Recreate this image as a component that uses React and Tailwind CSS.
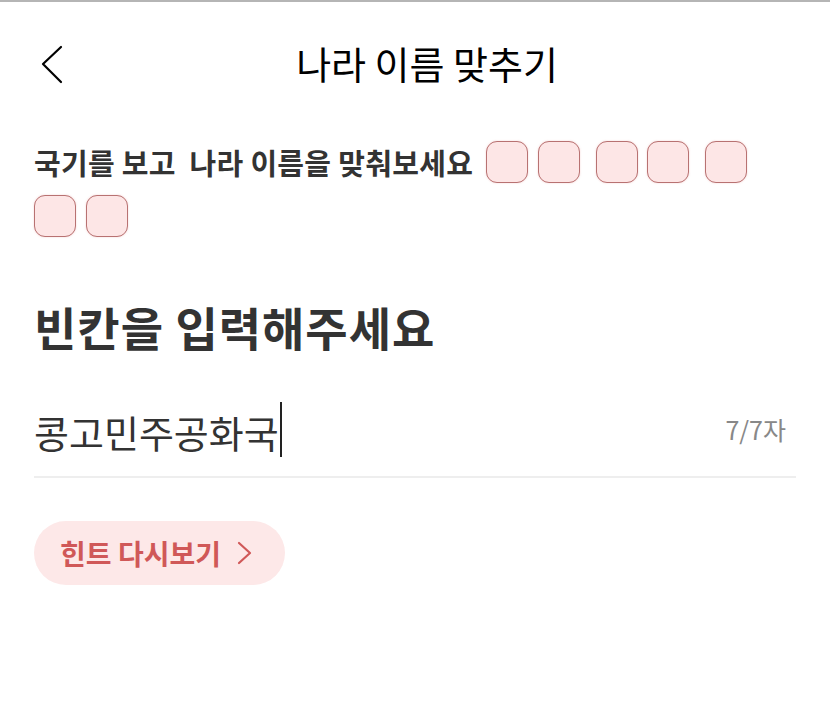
import { useState } from 'react'

const font = { fontFamily: '"Noto Sans CJK KR", "Noto Sans", sans-serif' }

// answer: 콩고 민주 공화국 -> one blank per letter, grouped by word
const groups = [2, 2, 3]

const Blank = ({ last }) => (
  <span
    className={`block w-[42px] h-[42px] rounded-[11px] bg-[#fde6e6] border-[1.5px] border-[#b87272] shadow-[0_0_2px_rgba(220,120,120,0.35)] ${last ? 'mr-[16px]' : 'mr-[9.5px]'}`}
  />
)

export default function App() {
  const [value] = useState('콩고민주공화국')

  return (
    <div className="w-[830px] h-[709px] bg-white border-t-2 border-[#b5b5b5]" style={font}>
      {/* header */}
      <div className="relative h-[122px] flex items-center justify-center pl-[24px]">
        <button className="absolute left-[41px] top-[43px] text-black">
          <svg width="24" height="40" viewBox="0 0 24 40" fill="none" stroke="currentColor" strokeWidth="2.2" strokeLinecap="round" strokeLinejoin="round">
            <path d="M20 2 L2 19 L20 37" />
          </svg>
        </button>
        <h1 className="text-[38px] text-black font-normal leading-none">나라 이름 맞추기</h1>
      </div>

      <div className="px-[34px]">
        {/* question with blanks */}
        <div className="mt-[17px] flex flex-wrap items-center gap-y-[12px]">
          <span className="text-[29px] tracking-[0.3px] leading-[42px] font-bold text-[#333] mr-[13px] whitespace-pre">국기를 보고  나라 이름을 맞춰보세요</span>
          {groups.map((n, g) =>
            Array.from({ length: n }).map((_, i) => (
              <Blank key={`${g}-${i}`} last={i === n - 1} />
            ))
          )}
        </div>

        <h2 className="mt-[66px] text-[46px] tracking-[1px] font-bold text-[#333] leading-none">빈칸을 입력해주세요</h2>

        {/* input */}
        <div className="mt-[53px] flex items-center justify-between border-b-2 border-[#eeeeee] pb-[19px]">
          <div className="flex items-center text-[38px] text-[#333] leading-none">
            <span className="mt-[4px]">{value}</span>
            <span className="w-[2px] h-[55px] bg-[#222] ml-[1px]" />
          </div>
          <span className="text-[25px] text-[#888] mr-[10px]">7/7자</span>
        </div>

        {/* hint button */}
        <button className="mt-[43px] h-[64px] pl-[26px] pr-[33px] rounded-full bg-[#fde8e8] flex items-center gap-[16px] text-[#d05858]">
          <span className="text-[28px] font-bold leading-none">힌트 다시보기</span>
          <svg width="15" height="24" viewBox="0 0 15 24" fill="none" stroke="currentColor" strokeWidth="2.2" strokeLinecap="round" strokeLinejoin="round">
            <path d="M2 2 L13 12 L2 22" />
          </svg>
        </button>
      </div>
    </div>
  )
}
